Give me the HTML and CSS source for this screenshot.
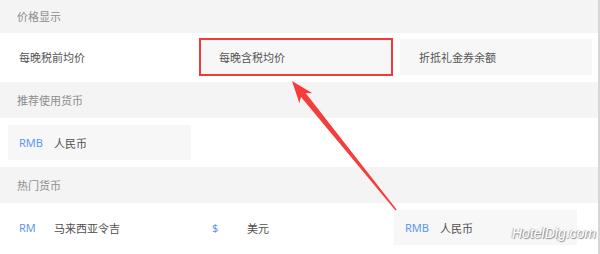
FILE: index.html
```html
<!DOCTYPE html>
<html lang="zh-CN">
<head>
    <meta charset="UTF-8">
    <meta name="viewport" content="width=device-width, initial-scale=1.0">
    <title>货币设置</title>
    <link rel="stylesheet" href="styles.css">
</head>
<body>
    <div class="panel">
        <div class="section-title">价格显示</div>
        <div class="price-row">
            <div class="price-opt">每晚税前均价</div>
            <div class="price-opt active">每晚含税均价</div>
            <div class="price-opt filled">折抵礼金券余额</div>
        </div>

        <div class="section-title">推荐使用货币</div>
        <div class="cur-row">
            <div class="cur"><span class="code">RMB</span><span class="name">人民币</span></div>
        </div>

        <div class="section-title">热门货币</div>
        <div class="cur-row">
            <div class="cur plain"><span class="code">RM</span><span class="name">马来西亚令吉</span></div>
            <div class="cur plain"><span class="code">$</span><span class="name">美元</span></div>
            <div class="cur"><span class="code">RMB</span><span class="name">人民币</span></div>
        </div>

        <!-- annotation arrow -->
        <svg class="arrow" width="600" height="254" viewBox="0 0 600 254">
            <polygon fill="#f63d3d" points="292,81 312.4,93.3 305.6,93.1 396.6,209.5 395.5,210.5 301,96.9 299.4,103.3"/>
        </svg>
        <div class="watermark">HotelDig.com</div>
    </div>
</body>
</html>
```

FILE: styles.css
```css
*{
    margin: 0;
    padding: 0;
    box-sizing: border-box;
}
body{
    font-family: "Noto Sans CJK SC", "Noto Sans", sans-serif;
    font-size: 11px;
    background: #fff;
}
.panel{
    position: relative;
    width: 600px;
    height: 254px;
    overflow: hidden;
    border-right: 2px solid #d6d6d6;
}
.section-title{
    height: 36px;
    line-height: 36px;
    padding-left: 17px;
    background-color: #f4f4f4;
    color: #8d8d8d;
}
.section-title:first-child{
    height: 33px;
    line-height: 32px;
}
.price-row{
    display: grid;
    grid-template-columns: 192px 192px 192px;
    column-gap: 8px;
    height: 49px;
    padding-top: 6px;
}
.price-opt{
    height: 36px;
    line-height: 36px;
    padding-left: 19px;
    color: #555;
}
.price-opt.filled{
    background-color: #f7f7f7;
}
.price-opt.active{
    background-color: #f7f7f7;
    border: 2px solid #f4393b;
    margin: -1px;
    height: 38px;
    line-height: 34px;
    padding-left: 18px;
}
.cur-row{
    display: grid;
    grid-template-columns: 183px 183px 183px;
    column-gap: 10px;
    height: 49px;
    padding: 7px 0 0 8px;
}
.cur-row:last-of-type{
    padding-top: 8px;
}
.cur{
    display: flex;
    align-items: center;
    height: 35px;
    padding-left: 11px;
    background-color: #f7f7f7;
}
.cur.plain{
    background-color: transparent;
}
.code{
    width: 35px;
    color: #5b97f2;
    font-family: "Noto Sans", sans-serif;
}
.name{
    color: #4f4f4f;
}
.arrow{
    position: absolute;
    left: 0;
    top: 0;
}
.watermark{
    position: absolute;
    left: 512px;
    top: 225px;
    font-family: "Liberation Sans", sans-serif;
    font-style: italic;
    font-size: 14px;
    color: #fff;
    text-shadow: 1px 1px 1px #8a8a8a, -1px 0 1px #b0b0b0;
}
```
